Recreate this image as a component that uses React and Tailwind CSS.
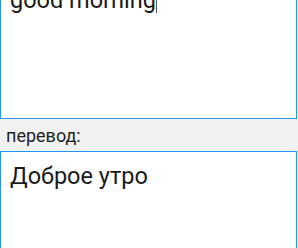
import React from "react";

const App = () => {
  return (
    <div
      className="w-[298px] h-[248px] overflow-hidden bg-[#f2f2f2] flex flex-col"
      style={{ fontFamily: "Roboto, 'Noto Sans', sans-serif" }}
    >
      <div className="-mt-[18px] h-[137px] mr-[1px] border border-[#2196f3] bg-white px-[9px] pt-[2px] text-[23.5px] leading-[30px] text-[#1a1a1a]">
        good morning<span className="inline-block w-[1px] h-[24px] bg-[#555] align-[-5px]" />
      </div>
      <div className="px-[6px] pt-[6px] h-[32px] text-[18px] leading-[22px] text-[#1f1f1f]">
        перевод:
      </div>
      <div className="flex-1 mr-[1px] border border-[#2196f3] border-b-0 bg-white px-[9px] pt-[9px] text-[23.5px] leading-[30px] text-[#1a1a1a]">
        Доброе утро
      </div>
    </div>
  );
};

export default App;
